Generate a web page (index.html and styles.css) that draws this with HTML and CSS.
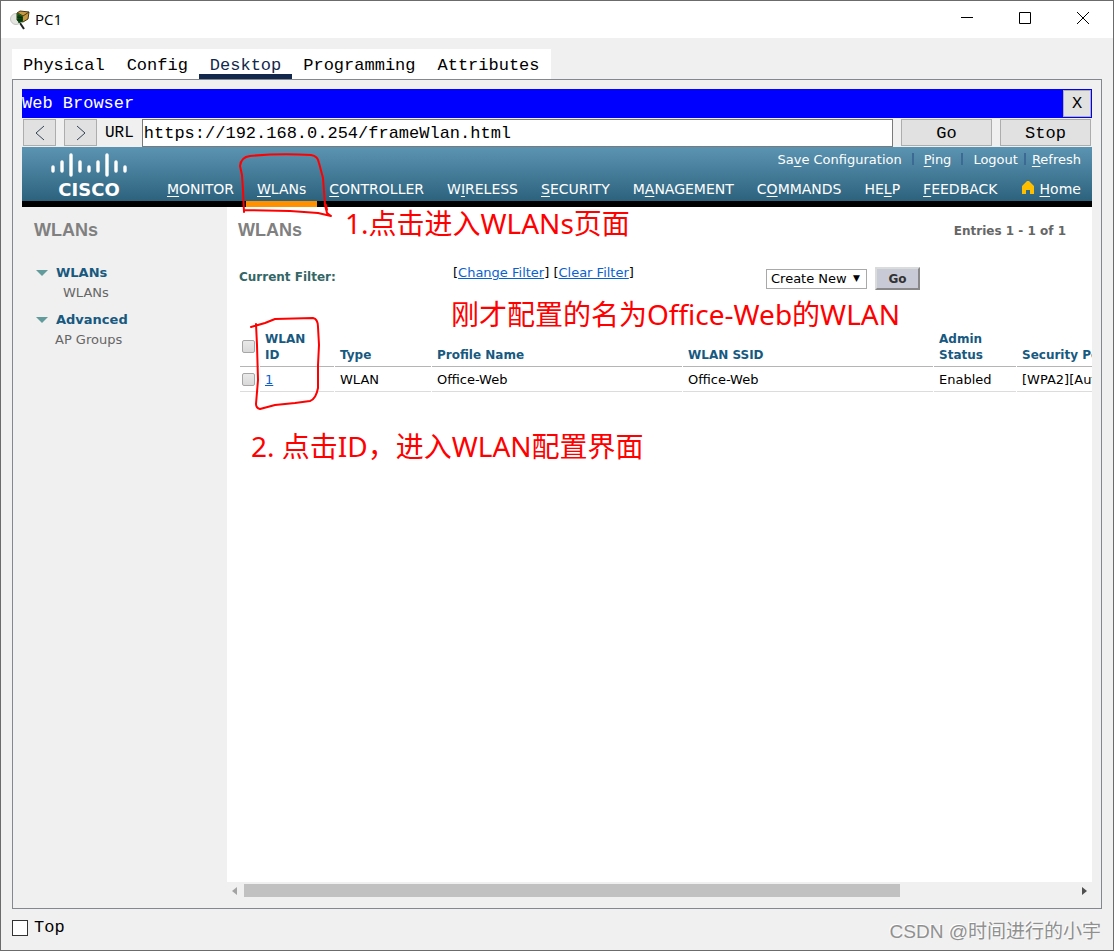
FILE: index.html
```html
<!DOCTYPE html>
<html lang="zh-CN">
<head>
    <meta charset="UTF-8">
    <meta name="viewport" content="width=device-width, initial-scale=1.0">
    <title>PC1</title>
    <link rel="stylesheet" href="styles.css">
</head>
<body>
    <div class="window">
        <header class="titlebar">
            <svg class="app-icon" width="20" height="20" viewBox="0 0 20 20">
                <path d="M10 13l4 6" stroke="#222" stroke-width="2"/>
                <circle cx="6" cy="9" r="5.500" fill="#e4e4e0" stroke="#c4c4c0"/>
                <path d="M7 3l3-2 9 1-1 7-5 3-6-2z" fill="#c79a42" stroke="#4a3812"/>
                <path d="M8 3l5 3 6-4" fill="none" stroke="#4a3812"/>
                <path d="M7 3l6 3v6l-4 1-2-3z" fill="#14601c"/>
                <path d="M9 5v8M11 6v6M7 7l6 1M7 10l6 0" stroke="#062a08"/>
            </svg>
            <span class="window-title">PC1</span>
            <div class="window-controls">
                <button type="button" aria-label="Minimize"><svg width="12" height="12"><path d="M0 5.5h12" stroke="#000"/></svg></button>
                <button type="button" aria-label="Maximize"><svg width="12" height="12"><path d="M.5.5h11v11H.5z" fill="none" stroke="#000"/></svg></button>
                <button type="button" aria-label="Close"><svg width="12" height="12"><path d="M0 0l12 12M12 0L0 12" stroke="#000"/></svg></button>
            </div>
        </header>

        <nav class="tabs">
            <a href="#physical">Physical</a>
            <a href="#config">Config</a>
            <a href="#desktop" class="active">Desktop</a>
            <a href="#programming">Programming</a>
            <a href="#attributes">Attributes</a>
        </nav>

        <main class="panel">
            <div class="browser-title">
                <span>Web Browser</span>
                <button type="button" class="btn btn-x">X</button>
            </div>
            <form class="url-bar">
                <button type="button" class="btn btn-arrow" aria-label="Back"><svg width="10" height="16"><path d="M9 1L1 8l8 7" fill="none" stroke="#345"/></svg></button>
                <button type="button" class="btn btn-arrow" aria-label="Forward"><svg width="10" height="16"><path d="M1 1l8 7-8 7" fill="none" stroke="#345"/></svg></button>
                <label for="url">URL</label>
                <input type="text" id="url" value="https://192.168.0.254/frameWlan.html">
                <button type="button" class="btn btn-wide">Go</button>
                <button type="button" class="btn btn-wide">Stop</button>
            </form>

            <div class="page">
                <div class="cisco-header">
                    <div class="cisco-logo">
                        <svg width="78" height="25" viewBox="0 0 78 25" stroke="#fff" stroke-width="3.4" stroke-linecap="round">
                            <path d="M3 15v4M12 10v9M21 3v20M30 10v9M39 15v4M48 10v9M57 3v20M66 10v9M75 15v4"/>
                        </svg>
                        <span>CISCO</span>
                    </div>
                    <div class="cisco-menus">
                        <div class="top-links">
                            <a href="#save">Sa<u>v</u>e Configuration</a>
                            <i></i>
                            <a href="#ping"><u>P</u>ing</a>
                            <i></i>
                            <a href="#logout">Logout</a>
                            <i class="tight"></i>
                            <a href="#refresh"><u>R</u>efresh</a>
                        </div>
                        <nav class="main-nav">
                            <a href="#monitor"><u>M</u>ONITOR</a>
                            <a href="#wlans" class="active"><u>W</u>LANs</a>
                            <a href="#controller"><u>C</u>ONTROLLER</a>
                            <a href="#wireless">W<u>I</u>RELESS</a>
                            <a href="#security"><u>S</u>ECURITY</a>
                            <a href="#management">M<u>A</u>NAGEMENT</a>
                            <a href="#commands">C<u>O</u>MMANDS</a>
                            <a href="#help">HE<u>L</u>P</a>
                            <a href="#feedback"><u>F</u>EEDBACK</a>
                            <a href="#home" class="home"><svg width="14" height="15" viewBox="0 0 14 15"><path d="M6 1h2l5 5v8H9v-4H5v4H1V6z" fill="#fdbf00"/></svg><span><u>H</u>ome</span></a>
                        </nav>
                    </div>
                </div>

                <div class="page-body">
                    <aside class="sidebar">
                        <h2>WLANs</h2>
                        <a href="#wlans" class="group">WLANs</a>
                        <a href="#wlans-list" class="item nested">WLANs</a>
                        <a href="#advanced" class="group">Advanced</a>
                        <a href="#ap-groups" class="item">AP Groups</a>
                    </aside>

                    <section class="content">
                        <div class="content-head">
                            <h2>WLANs</h2>
                            <span class="entries">Entries 1 - 1 of 1</span>
                        </div>
                        <div class="filter-row">
                            <span class="filter-label">Current Filter:</span>
                            <span class="filter-links">[<a href="#change">Change Filter</a>] [<a href="#clear">Clear Filter</a>]</span>
                            <div class="create">
                                <div class="select-wrap">
                                    <select aria-label="Action"><option>Create New</option></select>
                                </div>
                                <button type="button" class="go">Go</button>
                            </div>
                        </div>
                        <div class="table-wrap">
                            <table>
                                <colgroup>
                                    <col class="c-check"><col class="c-id"><col class="c-type"><col class="c-name"><col class="c-name"><col class="c-admin"><col class="c-sec">
                                </colgroup>
                                <thead>
                                    <tr>
                                        <th class="check"><input type="checkbox" aria-label="Select all"></th>
                                        <th>WLAN<br>ID</th>
                                        <th>Type</th>
                                        <th>Profile Name</th>
                                        <th>WLAN SSID</th>
                                        <th>Admin<br>Status</th>
                                        <th>Security Policies</th>
                                    </tr>
                                </thead>
                                <tbody>
                                    <tr>
                                        <td class="check"><input type="checkbox" aria-label="Select WLAN 1"></td>
                                        <td><a href="#wlan-1">1</a></td>
                                        <td>WLAN</td>
                                        <td>Office-Web</td>
                                        <td>Office-Web</td>
                                        <td>Enabled</td>
                                        <td>[WPA2][Auth(PSK)]</td>
                                    </tr>
                                </tbody>
                            </table>
                        </div>
                        <div class="scrollbar">
                            <svg width="5" height="8"><path d="M5 0v8L0 4z" fill="#a3a3a3"/></svg>
                            <div class="track"><div class="thumb"></div></div>
                            <svg width="5" height="8"><path d="M0 0v8l5-4z" fill="#505050"/></svg>
                        </div>
                    </section>
                </div>
            </div>
        </main>

        <footer class="bottom-bar">
            <input type="checkbox" id="top">
            <label for="top">Top</label>
        </footer>

        <!-- hand-drawn marks and notes over the window -->
        <svg class="marks" width="420" height="420" fill="none" stroke="#f00" stroke-width="2" stroke-linecap="round" stroke-linejoin="round">
            <path d="M244 212L243 190L242 175L240 166Q241 157 250 156Q280 153 311 155Q318 156 319 163L323 178L325 205L327 213L331 216L318 213L290 211L244 210M327 210L326 205"/>
            <path d="M251 327L265 323L275 319L313 318Q318 319 318 327L319 345L318 365L318 388Q316 399 310 401L295 403L275 405L260 409Q256 408 256 404L258 380L257 345L256 324"/>
        </svg>
        <p class="note note-1">1.点击进入WLANs页面</p>
        <p class="note note-2">刚才配置的名为Office-Web的WLAN</p>
        <p class="note note-3">2. 点击ID，进入WLAN配置界面</p>
        <span class="watermark">CSDN @时间进行的小宇</span>
    </div>
</body>
</html>
```
FILE: styles.css
```css
:root {
    --bg: #f0f0f0;
    --frame: #828790;
    --link: #0b5fce;
    --teal: #17597f;
    --mono: "Liberation Mono", monospace;
    --sans: "DejaVu Sans", sans-serif;
}
* { box-sizing: border-box; margin: 0; padding: 0; }
body {
    font-family: var(--sans);
    font-size: 13px;
    color: #000;
    background: var(--bg);
}
.window {
    position: relative;
    display: flex;
    flex-direction: column;
    min-height: 100vh;
    border: 1px solid #6b6b6b;
    overflow: hidden;
}
.titlebar {
    display: flex;
    align-items: center;
    height: 37px;
    padding-left: 9px;
    background: #fff;
}
.window-title {
    margin-left: 5px;
    font-family: "Open Sans", sans-serif;
    font-size: 15px;
    line-height: 20px;
    padding-bottom: 2px;
}
.window-controls {
    display: flex;
    margin-left: auto;
    padding-right: 1px;
}
.window-controls button {
    width: 58px;
    height: 36px;
    border: none;
    background: none;
}

/* window tabs */
.tabs {
    display: flex;
    align-self: flex-start;
    height: 30px;
    margin: 11px 0 0 11px;
    background: #fff;
    font-family: var(--mono);
    font-size: 17px;
}
.tabs a {
    padding: 0 11px;
    line-height: 34px;
    color: #000;
    text-decoration: none;
}
.tabs a.active {
    color: #12284c;
    box-shadow: inset 0 -5px #12284c;
}
.panel {
    display: flex;
    flex-direction: column;
    flex: 1;
    margin: 0 11px;
    padding: 9px;
    border: 1px solid var(--frame);
}

/* browser bar */
.browser-title {
    display: flex;
    justify-content: space-between;
    align-items: center;
    height: 29px;
    background: #00f;
    color: #fff;
    font-family: var(--mono);
    font-size: 17px;
}
.btn {
    border: 1px solid #adadad;
    background: #e1e1e1;
    color: #000;
    font-family: var(--mono);
    font-size: 17px;
}
.btn-x {
    width: 28px;
    height: 27px;
    margin-right: 1px;
}
.url-bar {
    display: flex;
    align-items: center;
    height: 29px;
    padding: 0 1px;
    gap: 8px;
    font-family: var(--mono);
    font-size: 16px;
}
.btn-arrow {
    display: flex;
    align-items: center;
    justify-content: center;
    width: 33px;
    height: 27px;
}
.btn-wide {
    width: 91px;
    height: 27px;
    padding-top: 2px;
}
.url-bar input {
    flex: 1;
    min-width: 0;
    height: 28px;
    padding: 2px 1px 0;
    border: 1px solid #7a7a7a;
    background: #fff;
    font-family: var(--mono);
    font-size: 17px;
}

/* cisco header */
.page {
    display: flex;
    flex-direction: column;
    flex: 1;
}
.cisco-header {
    display: flex;
    height: 60px;
    background: #000 linear-gradient(#5b94b2, #2d627d) 0 0 / 100% 54px no-repeat;
}
.cisco-logo {
    display: flex;
    flex-direction: column;
    align-items: center;
    width: 134px;
    padding-top: 5px;
    color: #fff;
    font-size: 18px;
    font-weight: bold;
    line-height: 26px;
}
.cisco-menus {
    flex: 1;
    display: flex;
    flex-direction: column;
}
.cisco-menus a {
    color: #fff;
    text-decoration: none;
    white-space: nowrap;
}
.cisco-menus u { text-underline-offset: 2px; }
.top-links {
    display: flex;
    justify-content: flex-end;
    align-items: center;
    height: 24px;
    padding-right: 11px;
}
.top-links i {
    width: 2px;
    height: 12px;
    margin: 0 10px;
    background: #3d6a94;
}
.top-links i.tight { margin: 0 6px; }
.main-nav {
    display: flex;
    justify-content: space-between;
    flex: 1;
    font-size: 14px;
}
.main-nav a {
    padding: 6px 11px 0;
    line-height: 24px;
    border-bottom: 6px solid transparent;
}
.main-nav a.active { border-bottom-color: #ff9000; }
.main-nav .home {
    display: flex;
    gap: 5px;
}
.home svg { margin-top: 3px; }

/* page body */
.page-body {
    display: flex;
    flex: 1;
}
h2 {
    font-family: "Liberation Sans", sans-serif;
    font-size: 18px;
    line-height: 24px;
    color: #808080;
}
.sidebar {
    width: 205px;
    padding: 11px 12px;
}
.sidebar h2 { margin-bottom: 20px; }
.sidebar a {
    display: block;
    text-decoration: none;
}
.sidebar .group {
    display: flex;
    align-items: center;
    gap: 8px;
    padding-left: 2px;
    line-height: 22px;
    font-weight: bold;
    color: var(--teal);
}
.group::before {
    content: "";
    border: 6px solid transparent;
    border-top-color: #629b9b;
    border-bottom: none;
}
.sidebar .item {
    padding-left: 21px;
    margin-bottom: 7px;
    line-height: 18px;
    color: #666;
}
.sidebar .nested { padding-left: 29px; }
.content {
    display: flex;
    flex-direction: column;
    flex: 1;
    min-width: 0;
    background: #fff;
}
.content-head {
    display: flex;
    justify-content: space-between;
    align-items: center;
    padding: 11px 26px 0 11px;
}
.entries {
    padding-top: 2px;
    font-size: 12px;
    font-weight: bold;
    color: #666;
}
.filter-row {
    display: flex;
    align-items: center;
    padding: 23px 172px 0 12px;
}
.filter-label {
    width: 214px;
    padding-bottom: 4px;
    font-size: 12px;
    font-weight: bold;
    color: #336666;
}
.filter-links { margin-bottom: 12px; }
.content a { color: var(--link); }
.create {
    display: flex;
    align-items: center;
    gap: 8px;
    margin-left: auto;
}
.select-wrap { position: relative; }
.select-wrap::after {
    content: "▼";
    position: absolute;
    right: 7px;
    top: 4px;
    font-size: 9px;
    pointer-events: none;
}
.create select {
    appearance: none;
    width: 101px;
    height: 20px;
    padding-left: 4px;
    border: 1px solid #a9a9a9;
    background: #fff;
    font-family: var(--sans);
    font-size: 13px;
}
.go {
    width: 45px;
    height: 23px;
    border: 2px solid;
    border-color: #dadcdc #888 #888 #dadcdc;
    background: #c8cbd6;
    color: #333;
    font-family: var(--sans);
    font-size: 12px;
    font-weight: bold;
}
.table-wrap {
    flex: 1;
    padding: 35px 0 0 12px;
    overflow: hidden;
}
table {
    table-layout: fixed;
    width: 936px;
    border-spacing: 1px 0;
}
.c-check { width: 19px; }
.c-id { width: 74px; }
.c-type { width: 96px; }
.c-name { width: 250px; }
.c-admin { width: 82px; }
th {
    padding: 4px 5px 3px;
    border-bottom: 1px solid #b5b5b5;
    color: var(--teal);
    font-size: 12px;
    line-height: 16px;
    text-align: left;
    vertical-align: bottom;
}
td {
    padding: 5px 5px 3px;
    border-bottom: 1px solid #dcdcdc;
    line-height: 16px;
    white-space: nowrap;
}
.check {
    padding: 0 2px;
    vertical-align: middle;
}
.check input {
    display: block;
    appearance: none;
    width: 13px;
    height: 13px;
    border: 1px solid #a6a6a6;
    border-radius: 2px;
    background: linear-gradient(#e9e9e9, #d9d9d9);
}
.scrollbar {
    display: flex;
    align-items: center;
    gap: 7px;
    height: 17px;
    padding: 0 5px;
    background: var(--bg);
}
.track { flex: 1; }
.thumb {
    width: 79%;
    height: 13px;
    background: #c1c1c1;
}
.bottom-bar {
    display: flex;
    align-items: center;
    gap: 6px;
    height: 41px;
    padding: 0 11px 4px;
    font-family: var(--mono);
    font-size: 17px;
}
.bottom-bar input {
    appearance: none;
    width: 16px;
    height: 16px;
    border: 1px solid #333;
    background: #fff;
}

/* notes */
.marks {
    position: absolute;
    top: -1px;
    left: -1px;
    pointer-events: none;
}
.note {
    position: absolute;
    color: #f00;
    font-family: "Noto Sans", "Noto Sans CJK SC", sans-serif;
    font-size: 28px;
    line-height: 36px;
    white-space: nowrap;
}
.note-1 { top: 204px; left: 344px; }
.note-2 { top: 295px; left: 450px; }
.note-3 { top: 427px; left: 250px; }
.watermark {
    position: absolute;
    right: 12px;
    bottom: 4px;
    color: #909090;
    font-family: "Liberation Sans", "Noto Sans CJK SC", sans-serif;
    font-size: 19px;
    line-height: 28px;
    text-shadow: -1px -1px #fff;
}
```
